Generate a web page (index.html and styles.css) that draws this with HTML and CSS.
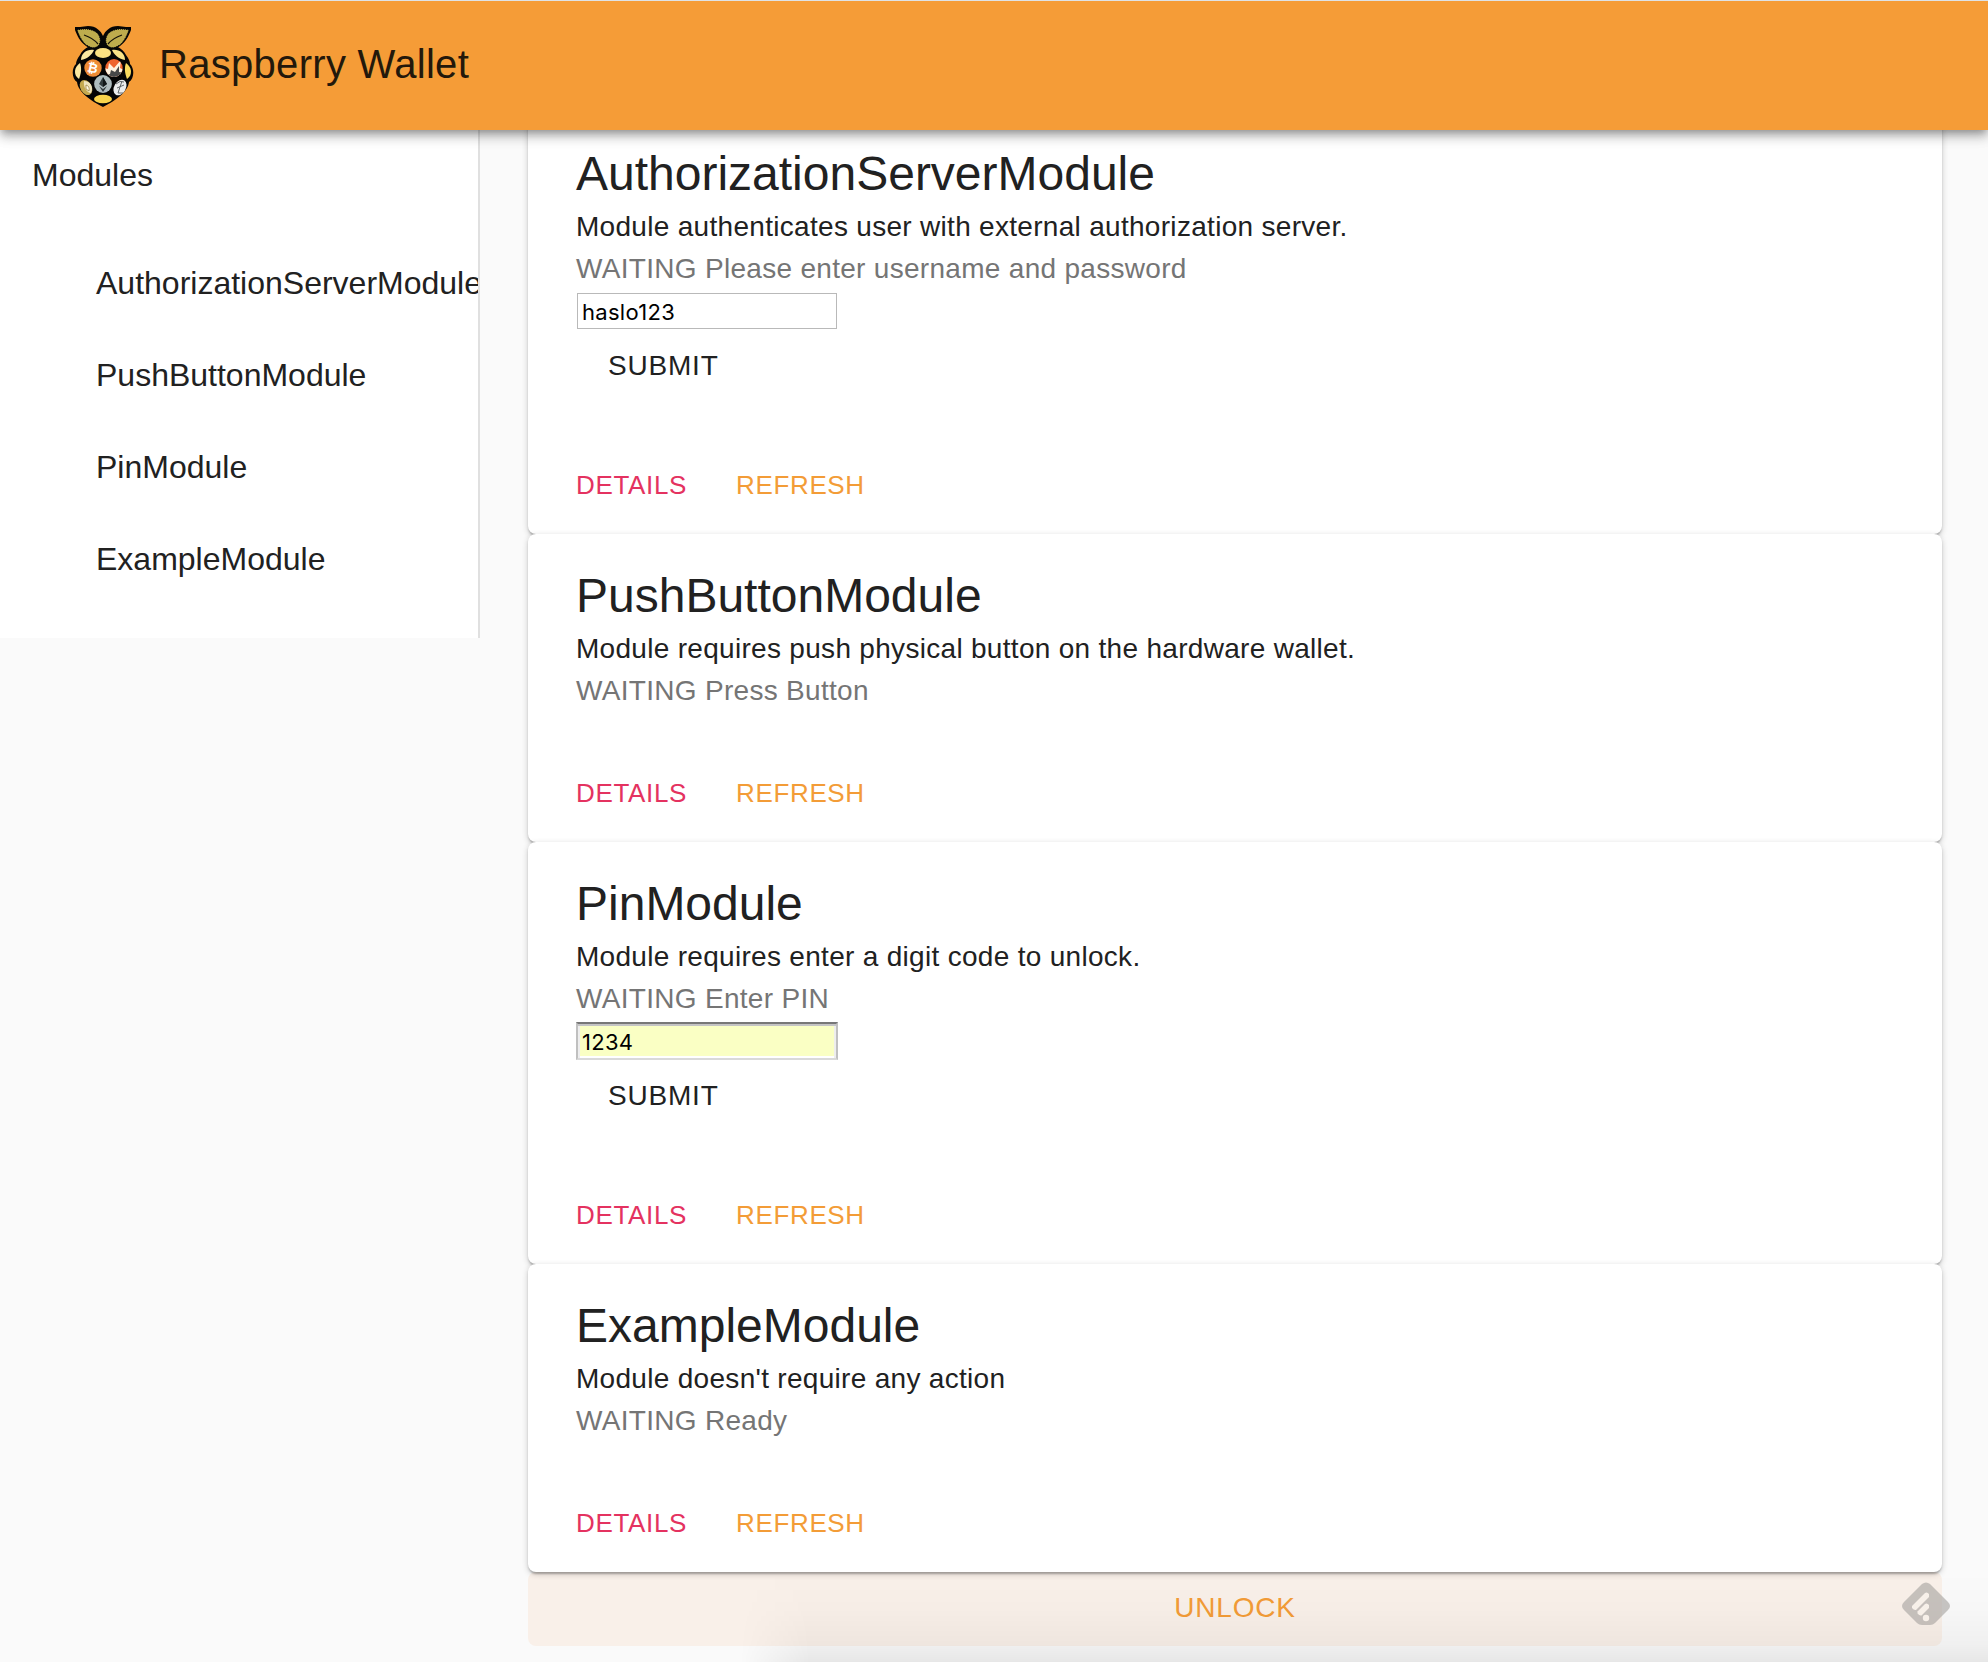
FILE: index.html
```html
<!DOCTYPE html>
<html lang="en">
<head>
<meta charset="utf-8">
<title>Raspberry Wallet</title>
<link rel="stylesheet" href="styles.css">
</head>
<body>
<header class="appbar">
  <svg class="logo" viewBox="0 0 62 82" aria-hidden="true">
    <path d="M31 20C27 24 20 25 14 20C8 16 5 9 3 4L3 1L8 1L16 0C24 0 29 5 31 10C33 5 38 0 46 0L54 1L59 1L59 4C57 9 54 16 48 20C42 25 35 24 31 20Z" fill="#050505"/>
    <path d="M31 15C41 18 51 22 54 29C57 33 58 36 58 38C63 43 62 53 57 56C56 66 43 75 31 81C19 75 6 66 5 56C0 53-1 43 4 38C4 36 5 33 8 29C11 22 21 18 31 15Z" fill="#050505"/>
    <path d="M5 4C13 2 22 3 26 8C29 12 29 17 26 20C21 24 16 20 13 18C9 14 7 9 5 4Z" fill="#beac4d" stroke="#050505" stroke-width="1" stroke-dasharray="1 1"/>
    <path d="M57 4C49 2 40 3 36 8C33 12 33 17 36 20C41 24 46 20 49 18C53 14 55 9 57 4Z" fill="#beac4d" stroke="#050505" stroke-width="1" stroke-dasharray="1 1"/>
    <path d="M12 9Q21 12 26 18M50 9Q41 12 36 18" fill="none" stroke="#171307" stroke-width="1.3"/>
    <ellipse cx="31" cy="27" rx="8" ry="5" fill="#fbe182"/>
    <path d="M9 34C9 27 15 23 22 24C20 29 15 33 9 34Z" fill="#fbe8a0"/>
    <path d="M53 34C53 27 47 23 40 24C42 29 47 33 53 34Z" fill="#fae388"/>
    <path d="M8 37C2 41 1 49 7 53C9 48 10 42 8 37Z" fill="#fbe8a0"/>
    <path d="M54 37C60 41 61 49 55 53C53 48 52 42 54 37Z" fill="#f8da5e"/>
    <ellipse cx="31" cy="73" rx="9" ry="4.3" fill="#f9d44c"/>
    <circle cx="21" cy="42" r="8.7" fill="#ee8b35"/>
    <text x="20.6" y="46.500" class="coin" transform="rotate(12 21 42)">₿</text>
    <clipPath id="xmr"><ellipse cx="42" cy="42" rx="8.7" ry="9"/></clipPath>
    <g clip-path="url(#xmr)">
      <path d="M32 31H52V52H32Z" fill="#ef642d"/>
      <path d="M32 42L36 43L37 37L42 42L49 34L48 42L52 44V52H32Z" fill="#fff2df"/>
      <path d="M35 49L38 48L39 44L43 46L47 40V46L52 47V53H35Z" fill="#484848"/>
    </g>
    <circle cx="31" cy="58" r="8.9" fill="#aebcbe"/>
    <path d="M31 51L35 58L31 61L27 58ZM27 60L31 63L35 60L31 66Z" fill="#303b3d"/>
    <path d="M31 51V61L35 58Z" fill="#111819"/>
    <ellipse cx="14" cy="61.5" rx="5.6" ry="8" transform="rotate(-30 14 61.5)" fill="#c4a94f"/>
    <path d="M12 55C18 55 22 60 19 67C15 67 11 61 12 55Z" fill="#eee4bd"/>
    <path d="M14 59Q18 60 17 65L14 63Z" fill="#fffbe9" stroke="#92772f" stroke-width=".7"/>
    <ellipse cx="48" cy="61.5" rx="5.8" ry="8.4" transform="rotate(30 48 61.5)" fill="#eceded"/>
    <path d="M50 55L46 67H51M45 62L52 59M44 58Q48 54 52 56" fill="none" stroke="#62676a" stroke-width="1"/>
  </svg>
  <h1 class="brand">Raspberry Wallet</h1>
</header>
<div class="layout">
  <nav class="sidebar">
    <div class="nav-head">Modules</div>
    <div class="nav-item">AuthorizationServerModule</div>
    <div class="nav-item">PushButtonModule</div>
    <div class="nav-item">PinModule</div>
    <div class="nav-item">ExampleModule</div>
  </nav>
  <main class="cards">
    <section class="card tall">
      <h2>AuthorizationServerModule</h2>
      <p>Module authenticates user with external authorization server.</p>
      <p class="status">WAITING Please enter username and password</p>
      <input class="field" type="text" value="haslo123">
      <button class="submit">SUBMIT</button>
      <div class="actions"><a class="details">DETAILS</a><a class="refresh">REFRESH</a></div>
    </section>
    <section class="card">
      <h2>PushButtonModule</h2>
      <p>Module requires push physical button on the hardware wallet.</p>
      <p class="status">WAITING Press Button</p>
      <div class="actions"><a class="details">DETAILS</a><a class="refresh">REFRESH</a></div>
    </section>
    <section class="card tall">
      <h2>PinModule</h2>
      <p>Module requires enter a digit code to unlock.</p>
      <p class="status">WAITING Enter PIN</p>
      <input class="field filled" type="text" value="1234">
      <button class="submit">SUBMIT</button>
      <div class="actions"><a class="details">DETAILS</a><a class="refresh">REFRESH</a></div>
    </section>
    <section class="card">
      <h2>ExampleModule</h2>
      <p>Module doesn't require any action</p>
      <p class="status">WAITING Ready</p>
      <div class="actions"><a class="details">DETAILS</a><a class="refresh">REFRESH</a></div>
    </section>
    <button class="unlock">UNLOCK</button>
  </main>
</div>
<div class="glow"></div>
<svg class="badge" viewBox="0 0 48 44" aria-hidden="true">
  <path d="M20 2Q24-1 28 2L46 20Q50 24 46 28L33 41Q31 43 28 43H20Q17 43 15 41L2 28Q-2 24 2 20Z" fill="#a6a39f" fill-opacity=".62"/>
  <path d="M10 24L23 11Q25 9.500 27 12V15L14 28Q12 28.500 10 26Z" fill="#f7f0e9"/>
  <path d="M15.500 29.500L23 22Q25 20.500 27 23V26L19.500 33.500Q17.500 34 15.500 31.500Z" fill="#f7f0e9"/>
  <circle cx="24" cy="36" r="3.200" fill="#f7f0e9"/>
</svg>
</body>
</html>
```
FILE: styles.css
```css
* { box-sizing: border-box; }
body {
  margin: 0;
  height: 1662px;
  position: relative;
  overflow: hidden;
  background: #fafafa;
  color: #212121;
  font-family: "Liberation Sans", Arial, sans-serif;
}
.appbar {
  position: relative;
  z-index: 2;
  display: flex;
  align-items: center;
  height: 130px;
  padding-left: 72px;
  background: #f59c37;
  border-top: 1px solid #dfe3e6;
  box-shadow: 0 4px 8px -2px rgba(0,0,0,.3), 0 8px 10px rgba(0,0,0,.15), 0 2px 18px rgba(0,0,0,.12);
}
.logo { width: 62px; height: 82px; margin-top: 2px; }
.coin { font: bold 13px "DejaVu Sans", sans-serif; fill: #fff; text-anchor: middle; }
.brand {
  margin: -3px 0 0 25px;
  font-size: 40px;
  font-weight: 400;
  line-height: 64px;
  letter-spacing: .3px;
  color: #23180b;
}
.layout { display: flex; align-items: flex-start; }
.sidebar {
  width: 480px;
  height: 508px;
  padding-top: 19px;
  overflow: hidden;
  background: #fff;
  border-right: 2px solid #e0e0e0;
  font-size: 32px;
  line-height: 52px;
  white-space: nowrap;
}
.nav-head { padding-left: 32px; margin-bottom: 36px; }
.nav-item { padding: 20px 0 20px 96px; }
.cards { width: 1414px; margin: -18px 0 0 48px; }
.card {
  display: flex;
  flex-direction: column;
  align-items: flex-start;
  height: 308px;
  padding: 30px 48px 33px;
  background: #fff;
  border-radius: 8px;
  box-shadow: 0 2px 6px rgba(0,0,0,.2), 0 2px 2px rgba(0,0,0,.14), 0 4px 2px -2px rgba(0,0,0,.12);
}
.card.tall { height: 422px; }
h2 { margin: 0; font-size: 48px; font-weight: 400; line-height: 64px; }
p { margin: 0; font-size: 28px; line-height: 42px; letter-spacing: .3px; }
.status { color: #757575; }
.field {
  width: 260px;
  height: 36px;
  margin: 3px 0 0 1px;
  padding: 2px 4px 0;
  border: 1px solid #b9b9b9;
  background: #fff;
  font: 22px Inter, sans-serif;
  letter-spacing: .3px;
  color: #000;
}
.field.filled {
  width: 262px;
  height: 38px;
  margin: 2px 0 -1px;
  background: #faffc4;
  border: 2px solid #c0c0c0;
  border-top-color: #777;
  border-bottom-color: #d9d9d9;
  box-shadow: inset 0 2px #c4c4c4, inset 2px 0 #eee, inset -2px 0 #eee, inset 0 -2px #fff;
}
button { padding: 0; border: 0; background: none; color: inherit; font: 28px/42px "Liberation Sans", Arial, sans-serif; letter-spacing: .8px; }
.submit { margin: 16px 0 0 32px; }
.actions { display: flex; gap: 49px; margin-top: auto; font-size: 26px; line-height: 32px; letter-spacing: .65px; }
.details { color: #e43260; }
.refresh, .unlock { color: #f39c37; }
.unlock { display: block; width: 100%; height: 74px; padding-bottom: 2px; background: #f9f0e9; border-radius: 8px; }
.card:nth-child(4) { position: relative; }
.glow {
  position: absolute;
  left: 740px;
  right: 0;
  bottom: 0;
  height: 90px;
  background: linear-gradient(transparent, rgba(0,0,0,.012) 40%, rgba(0,0,0,.04) 80%, rgba(0,0,0,.075));
  mask-image: linear-gradient(90deg, transparent, #000 70px);
  pointer-events: none;
}
.badge { position: absolute; left: 1902px; top: 1582px; width: 48px; height: 44px; }
```
